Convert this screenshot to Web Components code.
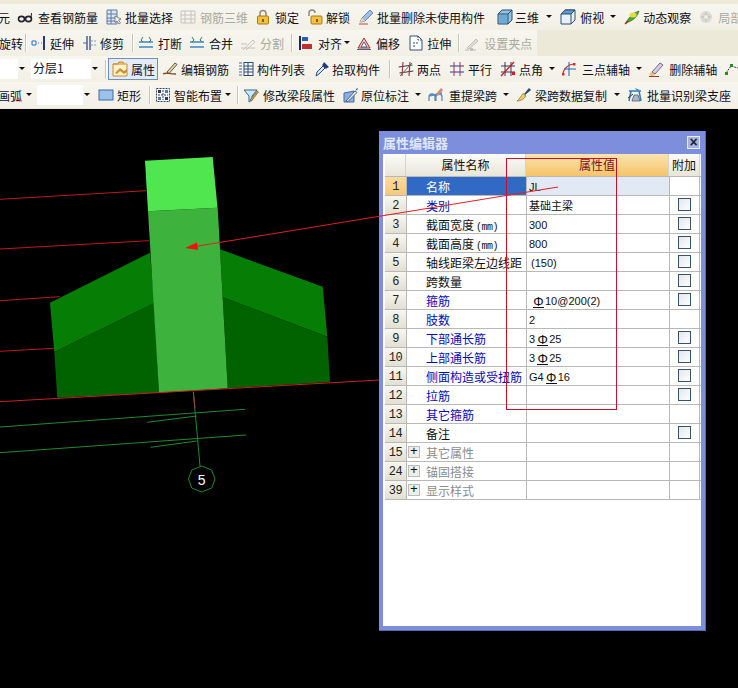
<!DOCTYPE html>
<html lang="zh">
<head>
<meta charset="utf-8">
<title>属性编辑器</title>
<style>
html, body { margin: 0; height: 100%; background: #000; overflow: hidden; }
body { font: 12px "Noto Sans CJK SC", "Liberation Sans", sans-serif; }
</style>
</head>
<body>

<tool-rows>
  <tool-bar>
    <tool-item lead="-2">元</tool-item>
    <tool-item lead="7" gap="5" icon="glasses">查看钢筋量</tool-item>
    <tool-item lead="8" icon="batch">批量选择</tool-item>
    <tool-item lead="7" gap="4" icon="grid" disabled>钢筋三维</tool-item>
    <tool-item lead="7" gap="4" icon="lock">锁定</tool-item>
    <tool-item lead="8" icon="unlock">解锁</tool-item>
    <tool-item lead="8" icon="pencil">批量删除未使用构件</tool-item>
    <tool-item lead="12" gap="2" icon="cube">三维</tool-item>
    <tool-arrow lead="6"></tool-arrow>
    <tool-item lead="7" gap="4" icon="cubeview">俯视</tool-item>
    <tool-arrow lead="5"></tool-arrow>
    <tool-item lead="7" icon="orbit">动态观察</tool-item>
    <tool-item lead="7" gap="4" icon="gear" disabled>局部</tool-item>
  </tool-bar>
  <tool-bar>
    <tool-item lead="-1">旋转</tool-item>
    <tool-sep lead="2"></tool-sep>
    <tool-item lead="4" icon="extend">延伸</tool-item>
    <tool-item lead="8" gap="2" icon="trim">修剪</tool-item>
    <tool-sep lead="8"></tool-sep>
    <tool-item lead="4" gap="4" icon="breakline">打断</tool-item>
    <tool-item lead="7" gap="4" icon="merge">合并</tool-item>
    <tool-item lead="7" gap="4" icon="split" disabled>分割</tool-item>
    <tool-sep lead="7"></tool-sep>
    <tool-item lead="5" gap="4" icon="align">对齐</tool-item>
    <tool-arrow lead="1"></tool-arrow>
    <tool-item lead="5" gap="4" icon="offset">偏移</tool-item>
    <tool-item lead="8" icon="stretch">拉伸</tool-item>
    <tool-sep lead="7"></tool-sep>
    <tool-item lead="4" gap="4" icon="grip" disabled>设置夹点</tool-item>
    <tool-end></tool-end>
  </tool-bar>
  <tool-bar>
    <tool-combo w="18"></tool-combo>
    <tool-arrow></tool-arrow>
    <tool-combo lead="5" w="60">分层1</tool-combo>
    <tool-arrow></tool-arrow>
    <tool-sep lead="6"></tool-sep>
    <tool-item lead="1" icon="props" active>属性</tool-item>
    <tool-item lead="4" icon="edit">编辑钢筋</tool-item>
    <tool-item lead="9" icon="list">构件列表</tool-item>
    <tool-item lead="9" gap="2" icon="picker">拾取构件</tool-item>
    <tool-sep lead="9"></tool-sep>
    <tool-item lead="7" icon="twopoint">两点</tool-item>
    <tool-item lead="8" icon="parallel">平行</tool-item>
    <tool-item lead="8" icon="angle">点角</tool-item>
    <tool-arrow lead="5"></tool-arrow>
    <tool-item lead="5" gap="5" icon="arc">三点辅轴</tool-item>
    <tool-arrow lead="5"></tool-arrow>
    <tool-item lead="5" gap="5" icon="erase">删除辅轴</tool-item>
    <tool-item lead="7" icon="node"></tool-item>
  </tool-bar>
  <tool-bar>
    <tool-item lead="-2">画弧</tool-item>
    <tool-arrow lead="3"></tool-arrow>
    <tool-combo lead="4" w="46"></tool-combo>
    <tool-arrow></tool-arrow>
    <tool-item lead="7" icon="rect">矩形</tool-item>
    <tool-sep lead="8"></tool-sep>
    <tool-item lead="4" icon="smart">智能布置</tool-item>
    <tool-arrow lead="2"></tool-arrow>
    <tool-sep lead="5"></tool-sep>
    <tool-item lead="4" gap="4" icon="funnel">修改梁段属性</tool-item>
    <tool-item lead="8" gap="2" icon="mark">原位标注</tool-item>
    <tool-arrow lead="5"></tool-arrow>
    <tool-item lead="6" gap="5" icon="span">重提梁跨</tool-item>
    <tool-arrow lead="5"></tool-arrow>
    <tool-item lead="6" icon="brush">梁跨数据复制</tool-item>
    <tool-arrow lead="6"></tool-arrow>
    <tool-item lead="6" gap="4" icon="support">批量识别梁支座</tool-item>
  </tool-bar>
</tool-rows>

<cad-view>
  <prop-dialog heading="属性编辑器">
    <prop-row n="1" label="名称" selected>JL</prop-row>
    <prop-row n="2" label="类别" blue check>基础主梁</prop-row>
    <prop-row n="3" label="截面宽度(mm)" check>300</prop-row>
    <prop-row n="4" label="截面高度(mm)" check>800</prop-row>
    <prop-row n="5" label="轴线距梁左边线距" check indent>(150)</prop-row>
    <prop-row n="6" label="跨数量" check></prop-row>
    <prop-row n="7" label="箍筋" blue check indent><rebar-mark></rebar-mark>10@200(2)</prop-row>
    <prop-row n="8" label="肢数" blue>2</prop-row>
    <prop-row n="9" label="下部通长筋" blue check>3<rebar-mark></rebar-mark>25</prop-row>
    <prop-row n="10" label="上部通长筋" blue check>3<rebar-mark></rebar-mark>25</prop-row>
    <prop-row n="11" label="侧面构造或受扭筋" blue check>G4<rebar-mark></rebar-mark>16</prop-row>
    <prop-row n="12" label="拉筋" blue check></prop-row>
    <prop-row n="13" label="其它箍筋" blue></prop-row>
    <prop-row n="14" label="备注" check></prop-row>
    <prop-row n="15" label="其它属性" group></prop-row>
    <prop-row n="24" label="锚固搭接" group></prop-row>
    <prop-row n="39" label="显示样式" group></prop-row>
  </prop-dialog>
</cad-view>

<script>
// 16x16 toolbar icons
const ICONS = {
  glasses: '<ellipse cx="4.5" cy="10" rx="3" ry="2.6" fill="none" stroke="#223" stroke-width="1.6"/><ellipse cx="11.5" cy="10" rx="3" ry="2.6" fill="none" stroke="#223" stroke-width="1.6"/><path d="M7 9h2M14 9l.5-5" stroke="#223" fill="none"/>',
  batch: '<path d="M1 1h10v14H1z" fill="#dfe7f2" stroke="#5a7aa0"/><path d="M1 5h10M1 9h10M1 12h10M5 1v14" stroke="#5a7aa0"/><path d="M9 7l6 3-2.5 1 2 3-1.5 1-2-3-2 1.5z" fill="#fff" stroke="#555" stroke-width=".7"/>',
  grid: '<path d="M1 2h14v12H1zM5 2v12M11 2v12M1 6h14M1 10h14" fill="none" stroke="#c4c4bc"/>',
  lock: '<path d="M5 7V4.500a3 3 0 0 1 6 0V7" fill="none" stroke="#8a8a80" stroke-width="1.500"/><rect x="2.500" y="7" width="11" height="8" rx="1" fill="#f1c23e" stroke="#a87a10"/><rect x="7" y="10" width="2" height="3" fill="#8a5a00"/>',
  unlock: '<path d="M1 7V4a3 3 0 0 1 6 0" fill="none" stroke="#8a8a80" stroke-width="1.500" transform="translate(1 0)"/><rect x="4" y="7" width="11" height="8" rx="1" fill="#f1c23e" stroke="#a87a10"/><rect x="9" y="10" width="2" height="3" fill="#8a5a00"/>',
  pencil: '<path d="M2 13l2-4 8-8 3 3-8 8z" fill="#9fbfe6" stroke="#58709a" stroke-width=".8"/><path d="M2 13l2-4 3 3z" fill="#f2d9a0"/><path d="M1 15h9" stroke="#b44" />',
  cube: '<path d="M1 5l4-4h10v10l-4 4H1z" fill="#8fc4e6" stroke="#2a4d6e"/><path d="M1 5h10v10M11 5l4-4" fill="none" stroke="#2a4d6e"/><path d="M2 6h8v8H2z" fill="#6fa9d6"/>',
  cubeview: '<path d="M1 5l4-4h10v10l-4 4H1z" fill="#e6f2fa" stroke="#2a4d6e"/><path d="M1 5l4-4h10l-4 4z" fill="#5b9bd0" stroke="#2a4d6e"/><path d="M11 5v10M11 5l4-4" fill="none" stroke="#2a4d6e"/>',
  orbit: '<path d="M2 14C4 9 9 4 15 2c-1 5-6 10-13 12z" fill="#4fa82e" stroke="#26601a" stroke-width=".6"/><ellipse cx="9" cy="6" rx="3.500" ry="2.500" fill="#e6dc3c"/><path d="M1 15l3-3" stroke="#a02020" stroke-width="1.500"/>',
  gear: '<circle cx="8" cy="8" r="6" fill="#dcdcd4"/><path d="M8 2l2 6-2 6-2-6zM2 8l6-2 6 2-6 2z" fill="#c8c8c0"/><circle cx="8" cy="8" r="2" fill="#eeeee8"/>',
  extend: '<path d="M1 6h4v4H1zM7 8h1M10 8h1" fill="none" stroke="#2a70c0"/><path d="M13 1v14" stroke="#2a3a70" stroke-width="2"/>',
  trim: '<path d="M5 1v14M8 1v14" stroke="#2a3a70" stroke-width="1.200"/><path d="M1 8h4" stroke="#2a70c0"/><path d="M9 6h6M9 10h6" stroke="#7a9ac8" stroke-dasharray="2 1"/>',
  breakline: '<path d="M1 7h14M1 12h14" stroke="#3a88c8" stroke-width="1.500"/><path d="M5 2L3 5l2 2M11 2l2 3-2 2" fill="none" stroke="#3a7a4a"/>',
  merge: '<path d="M1 7h14M1 12h14" stroke="#3a88c8" stroke-width="1.500"/><path d="M3 2l2 3-2 2M13 2l-2 3 2 2" fill="none" stroke="#3a7a4a"/>',
  split: '<path d="M1 13h14M1 9h6M3 15l10-10 2 2-9 8" fill="none" stroke="#c4c4bc"/>',
  align: '<path d="M2 1v14" stroke="#1a2a60" stroke-width="2"/><rect x="4" y="2" width="6" height="4" fill="#2a60b0"/><rect x="4" y="9" width="10" height="5" fill="#c03030"/>',
  offset: '<path d="M2 13l6-10 6 10z" fill="#f2c6c6" stroke="#a03030" stroke-linejoin="round"/><path d="M5 12l3-5 3 5z" fill="#fff" stroke="#506080"/><path d="M1 14.500h14" stroke="#506080"/>',
  stretch: '<path d="M2 1h8l4 4v10H2z" fill="#fff" stroke="#34507a"/><path d="M10 1v4h4M5 8h5M5 11h3" fill="none" stroke="#34507a" stroke-dasharray="2 1"/>',
  grip: '<path d="M3 13l9-9 2 2-9 8z" fill="#dededa" stroke="#c0c0b8"/><path d="M1 15h4M8 15h4" stroke="#b8b8b0"/><rect x="6" y="13" width="3" height="3" fill="#c0c0b8"/>',
  props: '<path d="M1 3h14v12H1z" fill="#fff2c8" stroke="#c88a30"/><path d="M1 3h5l1-2h4l1 2" fill="#f0c060" stroke="#c88a30"/><path d="M3 12l5-5 4 3 3-2v3l-3 2-4-3-3 3z" fill="#d09030"/>',
  edit: '<path d="M1 13c3-2 5 0 13 0" fill="none" stroke="#8a4a20" stroke-width="1.400"/><path d="M5 11l8-9 2 1.500-8 9z" fill="#e8d8a0" stroke="#303030" stroke-width=".8"/>',
  list: '<path d="M1 2h3M1 5h3M1 8h3M1 11h3M1 14h3" stroke="#506a8a" stroke-dasharray="2 0"/><rect x="6" y="1.500" width="9" height="13" fill="#fff" stroke="#2a4a7a"/><path d="M6 5h9M6 8h9M6 11h9M10 1.500v13" stroke="#2a4a7a"/>',
  picker: '<path d="M2 15l1-4 6-6 2 2-6 6z" fill="#cfe4f6" stroke="#2a5080"/><path d="M9 3l1-2 5 5-2 1-1 1-4-4z" fill="#203a80"/>',
  twopoint: '<path d="M1 5h14M1 11h14" stroke="#303860" transform="rotate(-8 8 8)"/><path d="M5 1l-1 14M12 1l-1 14" stroke="#a03030" stroke-width="1.100"/><path d="M2 15l12-13" stroke="#8a6030"/>',
  parallel: '<path d="M1 5h14M1 11h14" stroke="#2a3a90"/><path d="M5 1v14M11 1v14" stroke="#a03060"/>',
  angle: '<path d="M1 5h14M1 11h14" stroke="#303860"/><path d="M5 1v14M11 1v14" stroke="#303860"/><path d="M1 15L14 1" stroke="#d02020" stroke-width="1.400"/><rect x="12" y="11" width="3" height="3" fill="#d02020"/>',
  arc: '<path d="M2 14C2 8 7 3 14 3" fill="none" stroke="#d03030" stroke-width="1.200"/><path d="M8 1v14M3 8h12" stroke="#2a60a0"/><rect x="1" y="12" width="2.500" height="2.500" fill="#d03030"/><rect x="12" y="2" width="2.500" height="2.500" fill="#d03030"/>',
  erase: '<path d="M4 11l8-9 3 2-8 9z" fill="#d8cce8" stroke="#504860" stroke-width=".8"/><path d="M3 11l4 3-3 1-3-1z" fill="#e8c070"/><path d="M1 15.500h10" stroke="#a03030"/>',
  node: '<path d="M2 12l5-7 7 2" fill="none" stroke="#333" stroke-dasharray="2 1"/><rect x="1" y="11" width="3" height="3" fill="#2a8a2a"/><rect x="6" y="3" width="3" height="3" fill="#2a8a2a"/>',
  rect: '<rect x="1" y="3" width="14" height="10" fill="#9cc2ec" stroke="#3a6aa8"/>',
  smart: '<rect x="1.500" y="1.500" width="13" height="13" fill="#f4f6f8" stroke="#33435a" stroke-dasharray="2 1"/><path d="M8 3v10M3 8h10" stroke="#33435a" stroke-dasharray="2 1"/><rect x="3" y="3" width="3" height="3" fill="#2a3a60"/><rect x="10" y="10" width="3" height="3" fill="#2a3a60"/><rect x="10" y="3" width="3" height="3" fill="#4a7ab0"/><rect x="3" y="10" width="3" height="3" fill="#4a7ab0"/>',
  funnel: '<path d="M1 3h13l-5 6v4l-3 2V9z" fill="#cfe8f6" stroke="#2a6a9a"/><path d="M7 13l7-9 1.500 1-7 9z" fill="#c89a40" stroke="#604010" stroke-width=".5"/>',
  mark: '<path d="M1 15V6l10-2v11z" fill="#8aaee0" stroke="#4a6a9a"/><path d="M3 14l9-10 2 1.500-9 9z" fill="#e8eef6" stroke="#304a70" stroke-width=".8"/><path d="M12 4l2-3 1 1z" fill="#304a70"/>',
  span: '<path d="M1 14v-4a3 3 0 0 1 6 0v4M8 14v-4a3 3 0 0 1 6 0v4M1 9l13-3" fill="none" stroke="#5a8ac0" stroke-width="1.300"/><path d="M8 7l5-6 2 2-5 6z" fill="#d08a70"/>',
  brush: '<path d="M8 7l5-6 2 2-6 5z" fill="#30486a"/><path d="M1 14c2-1 4-5 6-7.500L10 9c-2 3-5 5-9 5z" fill="#e8cc70" stroke="#907020" stroke-width=".7"/>',
  support: '<path d="M2 4h12M4 4l-2 10M12 4l2 10" stroke="#3a7ab0" stroke-width="1.500" fill="none"/><path d="M5 14h8l-2-6H7z" fill="#a8b8c8" stroke="#405060" stroke-width=".7"/><path d="M1 11l5-4" stroke="#303840"/><path d="M8 1l5 2-3 2z" fill="#4a90d0"/>'
};

// the four rows above the drawing area
class ToolRows extends HTMLElement {
  constructor() {
    super();
    this.attachShadow({mode: 'open'}).innerHTML = `<style>
      :host { display: block; background: #ece9d8; padding: 4px 0 1px; }
    </style><slot></slot>`;
  }
}

class ToolBar extends HTMLElement {
  constructor() {
    super();
    this.attachShadow({mode: 'open'}).innerHTML = `<style>
      :host { display: flex; align-items: center; height: 26px; overflow: hidden;
        background: linear-gradient(#f7f6ef, #f2f0e5); color: #10101a; white-space: nowrap; }
    </style><slot></slot>`;
  }
}

// the darker rest of a row that is not full
class ToolEnd extends HTMLElement {
  constructor() {
    super();
    this.attachShadow({mode: 'open'}).innerHTML = `<style>
      :host { display: block; flex: 1; height: 26px; margin-left: 5px; background: #ece9d8; }
    </style>`;
  }
}

class ToolItem extends HTMLElement {
  constructor() {
    super();
    const icon = this.getAttribute('icon');
    const gap = this.getAttribute('gap') || 3;
    const svg = icon ? `<svg width="16" height="16" viewBox="0 0 16 16">${ICONS[icon]}</svg>` : '';
    this.attachShadow({mode: 'open'}).innerHTML = `<style>
      :host { display: flex; flex: none; align-items: center; gap: ${gap}px; height: 22px; box-sizing: border-box; }
      :host([disabled]) { color: #a9a9a0; }
      :host([active]) { border: 1px solid #6f8fb8; padding: 0 2px 0 3px; background: #e4ebf4; }
      svg { flex: none; }
    </style>${svg}<slot></slot>`;
    this.style.marginLeft = (this.getAttribute('lead') || 0) + 'px';
  }
}

class ToolArrow extends HTMLElement {
  constructor() {
    super();
    this.attachShadow({mode: 'open'}).innerHTML = `<style>
      :host { display: block; flex: none; width: 8px; height: 8px; }
      i { display: block; width: 0; margin: 2px auto 0; border: 3px solid transparent; border-top-color: #111; border-bottom: 0; }
    </style><i></i>`;
    this.style.marginLeft = (this.getAttribute('lead') || 0) + 'px';
  }
}

class ToolSep extends HTMLElement {
  constructor() {
    super();
    this.attachShadow({mode: 'open'}).innerHTML = `<style>
      :host { display: block; flex: none; width: 2px; height: 18px; box-sizing: border-box;
        border-left: 1px solid #c8c6b8; border-right: 1px solid #fff; }
    </style>`;
    this.style.marginLeft = (this.getAttribute('lead') || 0) + 'px';
  }
}

class ToolCombo extends HTMLElement {
  constructor() {
    super();
    this.attachShadow({mode: 'open'}).innerHTML = `<style>
      :host { display: block; flex: none; height: 20px; line-height: 18px; padding-left: 2px; box-sizing: border-box; background: #fff; }
    </style><slot></slot>`;
    this.style.marginLeft = (this.getAttribute('lead') || 0) + 'px';
    this.style.width = this.getAttribute('w') + 'px';
  }
}

// black drawing area: the beam model, the dialog, and the red notes over both
class CadView extends HTMLElement {
  constructor() {
    super();
    this.attachShadow({mode: 'open'}).innerHTML = `<style>
      :host { display: block; position: relative; height: 579px; background: #000; overflow: hidden; }
      svg { position: absolute; left: 0; top: 0; }
      .notes { pointer-events: none; }
      text { font: 14px "Liberation Sans", sans-serif; fill: #fff; }
    </style>
    <svg width="738" height="579" viewBox="0 109 738 579">
      <g stroke="#c01818" stroke-width="1" fill="none">
        <path d="M0 199.300L146 190.700M0 249L149 240.700M0 300.700L60 296.700M0 351.300L54 348.300"/>
      </g>
      <polygon points="50,302.700 150,252.700 154.300,303.300 54.300,352" fill="#067e06"/>
      <polygon points="54.300,352 154.300,303.300 159,392.700 57.300,397.700" fill="#006300"/>
      <polygon points="220,249.300 322.700,286.700 327.300,336.700 222.700,297.300" fill="#067e06"/>
      <polygon points="222.700,297.300 327.300,336.700 330,382 227.700,388.300" fill="#006300"/>
      <polygon points="148,211.300 217.700,207.700 227.700,388.300 159,392.700" fill="#3db23d"/>
      <polygon points="145,160.700 212.700,157 217.500,207.800 148,211.300" fill="#4fe64f"/>
      <path d="M0 401.700L379 380" stroke="#c82020" fill="none"/>
      <g stroke="#1f8a2f" fill="none">
        <path d="M193.300 391.700L200 466"/>
        <path d="M0 427L245 409.300M147.300 422.300L196.700 416M0 452.700L246 435M150.700 447.300L196.700 441"/>
        <polygon points="201.700,466 211.700,470 215,479 211.700,488 201.700,492 191.700,488 188.500,479 191.700,470"/>
      </g>
      <path d="M193.300 391.700L195 408" stroke="#a04030" fill="none"/>
      <text x="201.700" y="484.500" text-anchor="middle">5</text>
    </svg>
    <slot></slot>
    <svg class="notes" width="738" height="579" viewBox="0 109 738 579">
      <path d="M195 246.500L558 187" stroke="#e02020" fill="none"/>
      <polygon points="185,248 197,242.500 198,250" fill="#f01010"/>
      <rect x="506.500" y="158.500" width="110" height="251" stroke="#c8102a" fill="none"/>
    </svg>`;
  }
}

class PropDialog extends HTMLElement {
  constructor() {
    super();
    const heading = this.getAttribute('heading');
    this.attachShadow({mode: 'open'}).innerHTML = `<style>
      :host { display: block; position: absolute; left: 379px; top: 22px; width: 327px; height: 500px; box-sizing: border-box;
        border: 1px solid #5a6ab0; border-width: 0 1px 1px 0; background: #7d8fdc; padding: 0 4px 4px 4px; }
      .title { display: flex; align-items: center; justify-content: space-between; height: 23px; padding-right: 1px;
        color: #dfe7f7; font-weight: bold; font-size: 13px; }
      .close { width: 13px; height: 13px; box-sizing: border-box; background: #aab4d8; border: 1px solid #e6ecf8; color: #1c2440; font: bold 14px/11px "Liberation Sans", sans-serif; text-align: center; }
      .body { height: 472px; background: #fff; padding: 0 0 0 2px; box-sizing: border-box; }
      .head { display: grid; grid-template-columns: 21px 120px 143px 31px; height: 23px; line-height: 22px; text-align: center; border-bottom: 1px solid #b8b8b8; box-sizing: border-box; color: #111; }
      .head span { border-right: 1px solid #d6d4c8; background: linear-gradient(#fbfbf7, #e8e6da); }
      .head .val { background: linear-gradient(#fbe3b0, #f5c468); color: #7a1018; }
    </style>
    <div class="title"><span>${heading}</span><span class="close">×</span></div>
    <div class="body">
      <div class="head"><span></span><span>属性名称</span><span class="val">属性值</span><span>附加</span></div>
      <slot></slot>
    </div>`;
  }
}

class PropRow extends HTMLElement {
  constructor() {
    super();
    const label = this.getAttribute('label').replace('(mm)', '<small>(mm)</small>');
    const group = this.hasAttribute('group');
    const plus = group ? '<b class="plus">+</b>' : '';
    const box = this.hasAttribute('check') ? '<i class="box"></i>' : '';
    this.attachShadow({mode: 'open'}).innerHTML = `<style>
      :host { display: grid; grid-template-columns: 21px 120px 143px 31px; grid-template-rows: 18px; height: 19px; box-sizing: border-box; border-bottom: 1px solid #b8b8b8; color: #111; white-space: nowrap; }
      .n, .name, .val { padding-top: 2px; line-height: 16px; box-sizing: border-box; }
      .n { background: linear-gradient(#f8f7f0, #e2e0d2); text-align: center; font-family: "Liberation Mono", monospace; font-size: 12px; color: #222; letter-spacing: -.5px; }
      .name { position: relative; padding-left: 19px; border-left: 1px solid #b8b8b8; }
      .val { padding-left: 2px; border-left: 1px solid #b8b8b8; font-family: "Liberation Sans", "Noto Sans CJK SC", sans-serif; font-size: 11px; }
      .add { position: relative; border-left: 1px solid #b8b8b8; border-right: 1px solid #b8b8b8; }
      small { font: 10px "Liberation Mono", monospace; letter-spacing: -.5px; margin-left: 2px; }
      :host([blue]) .name { color: #0808b8; }
      :host([group]) .name { color: #8c8c8c; }
      :host([indent]) .val { padding-left: 4px; }
      :host([selected]) .n { background: linear-gradient(#fbdca0, #f8c878); }
      :host([selected]) .name { background: #316ac5; color: #fff; }
      :host([selected]) .val { background: #e1e9f5; }
      .plus { position: absolute; left: 1px; top: 3px; width: 12px; height: 12px; box-sizing: border-box; border: 1px solid #bbb; background: #eeeee6; color: #111; font: 13px/10px "Liberation Mono", monospace; text-align: center; }
      .box { position: absolute; left: 8px; top: 2px; width: 13px; height: 13px; box-sizing: border-box; border: 1px solid #36536e; background: linear-gradient(135deg, #e4e6e8, #fff); }
    </style>
    <div class="n">${this.getAttribute('n')}</div>
    <div class="name">${plus}${label}</div>
    <div class="val"><slot></slot></div>
    <div class="add">${box}</div>`;
  }
}

// the grade mark used before rebar diameters
class RebarMark extends HTMLElement {
  constructor() {
    super();
    this.attachShadow({mode: 'open'}).innerHTML = `<style>
      :host { display: inline-block; width: 11px; height: 11px; margin: 0 1px 0 2px; text-align: center; vertical-align: -1px; box-sizing: border-box; border-bottom: 1px solid #111; font: 13px/10px "Liberation Sans", sans-serif; }
    </style>Φ`;
  }
}

customElements.define('tool-rows', ToolRows);
customElements.define('tool-bar', ToolBar);
customElements.define('tool-end', ToolEnd);
customElements.define('tool-item', ToolItem);
customElements.define('tool-arrow', ToolArrow);
customElements.define('tool-sep', ToolSep);
customElements.define('tool-combo', ToolCombo);
customElements.define('cad-view', CadView);
customElements.define('prop-dialog', PropDialog);
customElements.define('prop-row', PropRow);
customElements.define('rebar-mark', RebarMark);
</script>
</body>
</html>
